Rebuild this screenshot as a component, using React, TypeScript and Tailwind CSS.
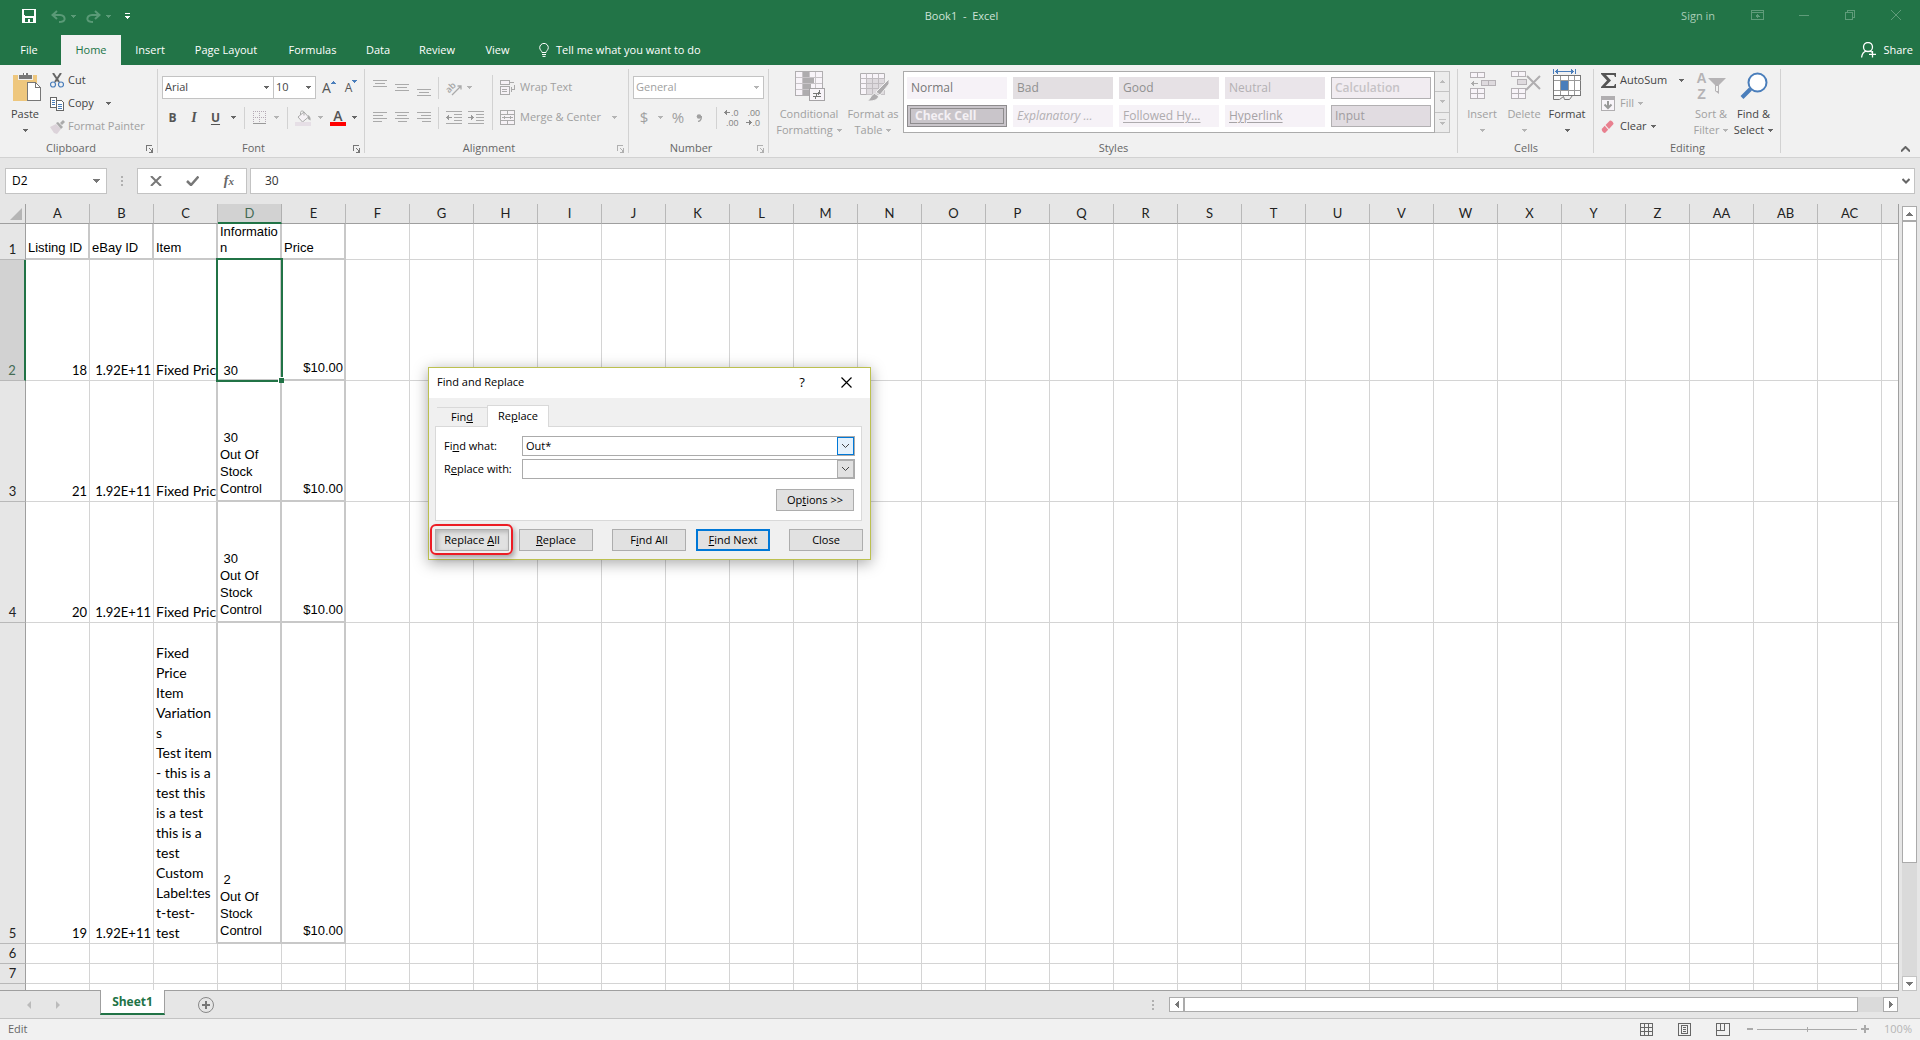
import React, { useState } from 'react';

const UI = "font-['Open_Sans','Segoe_UI',sans-serif]";
const CALIBRI = "font-['Lato','Calibri',sans-serif]";
const ARIAL = "font-['Liberation_Sans',Arial,sans-serif]";

interface IconProps {
  w: number;
  h: number;
  className?: string;
  smooth?: boolean;
  children: React.ReactNode;
}

const Icon = ({ w, h, className = '', smooth = false, children }: IconProps) => (
  <svg
    width={w}
    height={h}
    viewBox={`0 0 ${w} ${h}`}
    fill="none"
    shapeRendering={smooth ? 'auto' : 'crispEdges'}
    className={`shrink-0 ${className}`}
    aria-hidden="true"
  >
    {children}
  </svg>
);

const Caret = ({ className = 'text-[#666]' }: { className?: string }) => (
  <Icon w={5} h={3} className={className}>
    <path d="M0 0h5v1H0zM1 1h3v1H1zM2 2h1v1H2z" fill="currentColor" />
  </Icon>
);

const GREY = 'text-[#b4b4b4]';

const Launcher = ({ className = 'text-[#777]' }: { className?: string }) => (
  <Icon w={8} h={8} className={className}>
    <path d="M.5 6V.5H6M3 3l3 3" stroke="currentColor" />
    <path d="M7 3v5H3V7h2V6h1V3z" fill="currentColor" />
  </Icon>
);

/* ---------- title bar and tabs ---------- */

const TitleBar = () => (
  <header className="flex h-[35px] shrink-0 items-start bg-[#227447] text-white">
    <div className="flex h-8 flex-1 items-center pl-[22px]">
      <button aria-label="Save" className="mr-[15px]">
        <Icon w={14} h={14}>
          <path fillRule="evenodd" fill="#fff" d="M0 0h14v14H0zM2 1v5l1 1h8l1-1V1zM3 9v4h3v-3h2v3h3V9z" />
        </Icon>
      </button>
      <button aria-label="Undo" className="flex items-center gap-[5px] text-[#5a9a77]">
        <Icon w={15} h={13} smooth>
          <path d="M6 1L1.500 5 6 9M2 5h7c3 0 5 2 4.500 4.500C13 11.500 11 12 8 12" stroke="currentColor" strokeWidth={2} />
        </Icon>
        <Caret className="" />
      </button>
      <button aria-label="Redo" className="ml-[10px] flex items-center gap-[5px] text-[#5a9a77]">
        <Icon w={15} h={13} smooth>
          <path d="M9 1l4.500 4L9 9M13 5H6C3 5 1 7 1.500 9.500 2 11.500 4 12 7 12" stroke="currentColor" strokeWidth={2} />
        </Icon>
        <Caret className="" />
      </button>
      <button aria-label="Customize Quick Access Toolbar" className="ml-[14px]">
        <Icon w={5} h={7}>
          <path d="M0 0h5v1H0zM0 3h5v1H0zM1 4h3v1H1zM2 5h1v1H2z" fill="#fff" />
        </Icon>
      </button>
    </div>
    <h1 className="flex h-8 items-center text-[11px] text-[#cfe3d7]">Book1&nbsp; - &nbsp;Excel</h1>
    <div className="flex h-[30px] flex-1 items-center justify-end pr-[19px] text-[#5f9c7a]">
      <a href="#signin" className="mr-[36px] pt-[2px] text-[11px] text-[#a9cdb8]">Sign in</a>
      <button aria-label="Ribbon Display Options" className="mr-[35px]">
        <Icon w={13} h={10}>
          <path d="M.5.5h12v9H.5zM0 2.500h13M6.500 4v4M4.500 6.500h1v-1h2v1h1" stroke="currentColor" />
        </Icon>
      </button>
      <button aria-label="Minimize" className="mr-[36px]">
        <Icon w={10} h={10}><path d="M0 5.500h10" stroke="currentColor" /></Icon>
      </button>
      <button aria-label="Restore Down" className="mr-[36px]">
        <Icon w={10} h={10}><path d="M.5 2.500h7v7h-7zM2.500 2V.5h7v7H8" stroke="currentColor" /></Icon>
      </button>
      <button aria-label="Close">
        <Icon w={10} h={10} smooth><path d="M0 0l10 10M10 0L0 10" stroke="currentColor" /></Icon>
      </button>
    </div>
  </header>
);

const TABS = [
  { name: 'File', className: 'w-[61px] pr-[3px]' },
  { name: 'Home', className: 'w-[60px]' },
  { name: 'Insert', className: 'w-[58px]' },
  { name: 'Page Layout', className: 'w-[94px]' },
  { name: 'Formulas', className: 'w-[79px]' },
  { name: 'Data', className: 'w-[52px]' },
  { name: 'Review', className: 'w-[66px]' },
  { name: 'View', className: 'w-[55px]' },
];

const TabStrip = () => {
  const [active, setActive] = useState('Home');
  return (
    <nav className="flex h-[30px] shrink-0 bg-[#227447] text-[11px] text-white">
      {TABS.map((tab) => (
        <button
          key={tab.name}
          onClick={() => setActive(tab.name)}
          className={`${tab.className} ${active === tab.name ? 'bg-[#f1f1f1] text-[#227447]' : ''}`}
        >
          {tab.name}
        </button>
      ))}
      <button className="ml-[14px] flex items-center gap-[7px]">
        <Icon w={10} h={14} smooth>
          <path d="M3 9.500C3 8 .7 7 .7 4.700a4.300 4.300 0 0 1 8.600 0C9.300 7 7 8 7 9.500zM3 11.500h4M3.500 13.400h3" stroke="#fff" />
        </Icon>
        Tell me what you want to do
      </button>
      <button className="mr-[7px] ml-auto flex items-center gap-[7px]">
        <Icon w={15} h={16} smooth>
          <circle cx="7" cy="5" r="4.500" stroke="#fff" strokeWidth={1.300} />
          <path d="M.6 15.500c.3-3 2-5.500 4.400-6.300M9 9l2 1.300M11.500 9v6.500M8 12.400h7" stroke="#fff" strokeWidth={1.300} />
        </Icon>
        Share
      </button>
    </nav>
  );
};

/* ---------- ribbon ---------- */

interface GroupProps {
  label: string;
  className: string;
  launcher?: string;
  children: React.ReactNode;
}

const Group = ({ label, className, launcher, children }: GroupProps) => (
  <section className={`flex h-[92px] shrink-0 ${className}`}>
    <div className="flex min-w-0 flex-1 flex-col">
      <div className="flex h-[75px] min-w-0">{children}</div>
      <div className="flex h-[17px] items-center pr-[3px] text-[11px] text-[#666]">
        <span className={`flex-1 text-center ${launcher ? 'pr-1' : 'pl-1'}`}>{label}</span>
        {launcher && (
          <button aria-label={`${label} settings`}>
            <Launcher className={launcher} />
          </button>
        )}
      </div>
    </div>
    <div className="my-1 w-px bg-[#d2d2d2]" />
  </section>
);

interface BigButtonProps {
  icon: React.ReactNode;
  lines: string[];
  className: string;
  caret?: string;
}

/* one line: caret sits below it; two lines: caret follows the second */
const BigButton = ({ icon, lines, className, caret = 'text-[#666]' }: BigButtonProps) => (
  <button className={`flex shrink-0 flex-col items-center text-[11px] leading-4 whitespace-nowrap ${className}`}>
    <span className="flex h-[41px] items-center">{icon}</span>
    <span>{lines[0]}</span>
    <span className="flex h-4 items-center gap-1">
      {lines[1]}
      <Caret className={caret} />
    </span>
  </button>
);

const Clipboard = () => (
  <Group label="Clipboard" className="w-[158px]" launcher="text-[#777]">
    <BigButton
      className="w-[50px] text-[#444]"
      lines={['Paste']}
      icon={
        <Icon w={28} h={30} className="ml-1">
          <path d="M0 4h24v26H0z" fill="#eec77e" />
          <path d="M5 3h4V1h6v2h4v5H5z" fill="#777" stroke="#f1f1f1" />
          <path d="M11 2h2v2h-2z" fill="#fff" />
          <path d="M14.500 11.500h8l5 5v13h-13z" fill="#fff" stroke="#777" />
          <path d="M22.500 11.500v5h5" stroke="#777" />
        </Icon>
      }
    />
    <div className="flex flex-col pt-1 text-[11px] text-[#444]">
      <button className="flex h-[23px] items-center gap-1">
        <Icon w={14} h={15} smooth>
          <path d="M3 0l6 9M11 0L5 9" stroke="#666" strokeWidth={2} />
          <circle cx="3" cy="11.500" r="2.500" stroke="#4a7ebb" strokeWidth={1.200} />
          <circle cx="11" cy="11.500" r="2.500" stroke="#4a7ebb" strokeWidth={1.200} />
        </Icon>
        Cut
      </button>
      <button className="flex h-[23px] items-center gap-1">
        <Icon w={14} h={14}>
          <path d="M.5.5h6v10h-6z" fill="#fff" stroke="#666" />
          <path d="M2 3.500h3M2 5.500h3M2 7.500h3" stroke="#4a7ebb" />
          <path d="M6.500 3.500h5l2 2v8h-7z" fill="#fff" stroke="#666" />
          <path d="M8 7.500h4M8 9.500h4M8 11.500h4" stroke="#4a7ebb" />
        </Icon>
        <span className="mr-2">Copy</span>
        <Caret />
      </button>
      <button className="flex h-[23px] items-center gap-1 text-[#a0a0a0]">
        <Icon w={15} h={14} smooth className="-mr-px">
          <path d="M0 7l6-3 5 5-4 5-3-1z" fill="#dcd3da" />
          <path d="M6 3l2-1 5 5-2 2z" fill="#aaa" />
          <path d="M10 3l3-3 2 2-3 3z" fill="#aaa" />
        </Icon>
        Format Painter
      </button>
    </div>
  </Group>
);

const VSep = ({ className = 'h-[22px]' }: { className?: string }) => <span className={`w-px bg-[#d2d2d2] ${className}`} />;

interface ComboProps {
  label: string;
  value: string;
  className: string;
  disabled?: boolean;
}

const Combo = ({ label, value, className, disabled }: ComboProps) => (
  <span className={`relative flex h-[23px] items-center border border-[#c3c3c3] bg-white ${className}`}>
    <select
      aria-label={label}
      defaultValue={value}
      className={`h-full w-full appearance-none bg-transparent pl-[2px] text-[11px] outline-none ${disabled ? 'text-[#a0a0a0]' : 'text-[#444]'}`}
    >
      <option>{value}</option>
    </select>
    <span className="pointer-events-none absolute right-1">
      <Caret className={disabled ? GREY : 'text-[#666]'} />
    </span>
  </span>
);

const FontGroup = () => (
  <Group label="Font" className="w-[207px]" launcher="text-[#777]">
    <div className="flex flex-col gap-[7px] pt-[11px] pl-1 text-[#555]">
      <div className="flex h-[23px] items-center">
        <Combo label="Font" value="Arial" className="w-[112px]" />
        <Combo label="Font size" value="10" className="-ml-px w-[43px]" />
        <button aria-label="Increase Font Size" className="ml-[6px] flex items-start">
          <span className="text-[14px] leading-5">A</span>
          <Icon w={5} h={3} className="mt-[3px]"><path d="M2 0h1v1h1v1h1v1H0V2h1V1h1z" fill="#4a7ebb" /></Icon>
        </button>
        <button aria-label="Decrease Font Size" className="ml-[9px] flex items-start">
          <span className="text-[12px] leading-[22px]">A</span>
          <Icon w={5} h={3} className="mt-[3px]"><path d="M0 0h5v1H4v1H3v1H2V2H1V1H0z" fill="#4a7ebb" /></Icon>
        </button>
      </div>
      <div className="flex h-[23px] items-center">
        <button className="w-[21px] text-[12px] font-bold">B</button>
        <button className="w-[22px] font-['Liberation_Serif',serif] text-[14px] font-bold italic">I</button>
        <button className="w-[21px] text-[12px] font-bold underline underline-offset-2">U</button>
        <button aria-label="Underline options" className="ml-[5px]"><Caret /></button>
        <VSep className="ml-[8px] h-[22px]" />
        <button aria-label="Borders" className="ml-[8px] flex items-center gap-[8px]">
          <Icon w={13} h={13}>
            <path d="M0 .5h13M0 6.500h13" stroke="#b5aab5" strokeDasharray="1 1" />
            <path d="M.5 0v12M6.500 0v12M12.500 0v12" stroke="#b5aab5" strokeDasharray="1 1" />
            <path d="M0 12.500h13" stroke="#999" />
          </Icon>
          <Caret className={GREY} />
        </button>
        <VSep className="ml-[8px] h-[22px]" />
        <button aria-label="Fill Color" className="ml-[7px] flex items-center gap-[6px]">
          <Icon w={17} h={16} smooth>
            <path d="M3 7l6-5 4.500 5-6 5z" fill="#f6f2f6" stroke="#aaa" />
            <path d="M5.500 5V2.500C5.500.5 9 .5 9 2.500v3" stroke="#aaa" />
            <path d="M13 5c2 1 3 3 2.500 5.500L13 9z" fill="#aaa" />
            <path d="M0 12h16v4H0z" fill="#e6dfe6" />
          </Icon>
          <Caret className={GREY} />
        </button>
        <button aria-label="Font Color" className="ml-[7px] flex items-center gap-[6px]">
          <span className="flex h-4 w-4 flex-col items-center border-b-4 border-[#f00] text-[14px] leading-[11px] font-semibold">A</span>
          <Caret />
        </button>
      </div>
    </div>
  </Group>
);

const Lines = ({ d }: { d: string }) => (
  <Icon w={14} h={17}><path d={d} stroke="#aaa" /></Icon>
);

const Indent = ({ right }: { right?: boolean }) => (
  <Icon w={16} h={13}>
    <path d="M0 .5h16M8 3.500h8M8 6.500h8M8 9.500h8M0 12.500h16" stroke="#aaa" />
    <path d={right ? 'M0 6.500h6M3.500 4v5M4.500 5v3' : 'M0 6.500h6M2.500 4v5M1.500 5v3'} stroke="#999" />
  </Icon>
);

const Alignment = () => (
  <Group label="Alignment" className="w-[264px] text-[#a0a0a0]" launcher="text-[#b0b0b0]">
    <div className="flex flex-col gap-[7px] pt-[11px] pl-2">
      <div className="flex h-[23px] items-center">
        <button aria-label="Top Align" className="mr-2"><Lines d="M0 1.500h14M2 4.500h10M0 7.500h14" /></button>
        <button aria-label="Middle Align" className="mr-2"><Lines d="M0 5.500h14M2 8.500h10M0 11.500h14" /></button>
        <button aria-label="Bottom Align"><Lines d="M0 10.500h14M2 13.500h10M0 16.500h14" /></button>
        <VSep className="mx-[7px] h-[22px]" />
        <button aria-label="Orientation" className="flex items-center gap-[4px]">
          <Icon w={17} h={16} smooth className="overflow-visible">
            <text x="1" y="11" fontSize="9" fontWeight="600" fontFamily="Open Sans" fill="#a5a5a5" transform="rotate(-45 5 10)">ab</text>
            <path d="M6 15L15 6M11.500 6H15v3.500" stroke="#aaa" strokeWidth={1.300} />
          </Icon>
          <Caret className={GREY} />
        </button>
      </div>
      <div className="flex h-[23px] items-center">
        <button aria-label="Align Left" className="mr-2"><Lines d="M0 3.500h14M0 6.500h10M0 9.500h14M0 12.500h9" /></button>
        <button aria-label="Center" className="mr-2"><Lines d="M0 3.500h14M2 6.500h10M0 9.500h14M3 12.500h9" /></button>
        <button aria-label="Align Right"><Lines d="M0 3.500h14M4 6.500h10M0 9.500h14M5 12.500h9" /></button>
        <VSep className="mx-[7px] h-[22px]" />
        <button aria-label="Decrease Indent" className="mr-[6px]"><Indent /></button>
        <button aria-label="Increase Indent"><Indent right /></button>
      </div>
    </div>
    <VSep className="mt-[10px] mr-[7px] ml-2 h-[55px]" />
    <div className="flex flex-col gap-[7px] pt-[11px] text-[11px]">
      <button className="flex h-[23px] items-center gap-[5px]">
        <Icon w={15} h={15}>
          <path d="M.5.5h9v4h-9zM9 2.500h5M.5 6.500h9v8h-9z" fill="#f6f2f6" stroke="#aaa" />
          <path d="M2 9.500h5M2 11.500h5M14.500 5v4h-4M11.500 7v5" stroke="#aaa" />
        </Icon>
        Wrap Text
      </button>
      <button className="flex h-[23px] items-center gap-[5px]">
        <Icon w={15} h={15}>
          <path d="M.5.5h14v14H.5zM7.500 1v3M7.500 11v3M.5 4.500h14M.5 10.500h14" fill="#f6f2f6" stroke="#aaa" />
          <path d="M2 7.500h11M4.500 6v3M10.500 6v3" stroke="#aaa" />
        </Icon>
        <span className="mr-[6px]">Merge &amp; Center</span>
        <Caret className={GREY} />
      </button>
    </div>
  </Group>
);

const NumberGroup = () => (
  <Group label="Number" className="w-[140px] text-[#a0a0a0]" launcher="text-[#b0b0b0]">
    <div className="flex flex-col gap-[7px] pt-[11px] pl-1">
      <Combo label="Number Format" value="General" className="w-[131px]" disabled />
      <div className="flex h-[23px] items-center">
        <button className="ml-[6px] w-[10px] text-[15px]">$</button>
        <button aria-label="Accounting formats" className="ml-[9px]"><Caret className={GREY} /></button>
        <button className="ml-[8px] w-[14px] text-[15px]">%</button>
        <button aria-label="Comma Style" className="ml-[11px]">
          <Icon w={6} h={8} smooth><circle cx="3" cy="2.500" r="2.300" fill="#a0a0a0" /><path d="M5.300 2c.3 3-1.300 5-3.300 5.500" stroke="#a0a0a0" strokeWidth={1.300} /></Icon>
        </button>
        <VSep className="mr-[7px] ml-[14px] h-[22px]" />
        <button aria-label="Increase Decimal" className={`mr-[7px] flex flex-col items-end text-[9px] leading-[10px] text-[#888] ${ARIAL}`}>
          <span className="flex h-[10px] items-center gap-px">
            <Icon w={6} h={5}><path d="M0 2.500h6M1.500 1v3M2.500 0v5" stroke="currentColor" /></Icon>.0
          </span>
          <span className="h-[10px]">.00</span>
        </button>
        <button aria-label="Decrease Decimal" className={`flex flex-col items-end text-[9px] leading-[10px] text-[#888] ${ARIAL}`}>
          <span className="h-[10px]">.00</span>
          <span className="flex h-[10px] items-center gap-px">
            <Icon w={6} h={5}><path d="M0 2.500h6M4.500 1v3M3.500 0v5" stroke="currentColor" /></Icon>.0
          </span>
        </button>
      </div>
    </div>
  </Group>
);

const CELL_STYLES = [
  { name: 'Normal', className: 'bg-[#f6f2f7] text-[#777]' },
  { name: 'Bad', className: 'bg-[#e3dfe2] text-[#909090]' },
  { name: 'Good', className: 'bg-[#e6e1e5] text-[#909090]' },
  { name: 'Neutral', className: 'bg-[#eae5ea] text-[#b3b0b3]' },
  { name: 'Calculation', className: 'border border-[#b2b0b2] bg-[#f1ecf1] pl-[3px] font-semibold text-[#c5c2c5]' },
  { name: 'Check Cell', className: 'border-4 border-double border-[#8e8c8e] bg-[#c9c5ca] pl-0 font-bold text-[#f4f0f4]' },
  { name: 'Explanatory ...', className: 'bg-[#f6f2f7] text-[#b3b0b3] italic' },
  { name: 'Followed Hy...', className: 'bg-[#f6f2f7] text-[#aeabae] underline underline-offset-2' },
  { name: 'Hyperlink', className: 'bg-[#f6f2f7] text-[#a6a3a6] underline underline-offset-2' },
  { name: 'Input', className: 'border border-[#b2b0b2] bg-[#e1dce1] pl-[3px] text-[#a09da0]' },
];

const Styles = () => (
  <Group label="Styles" className="w-[689px] text-[#a0a0a0]">
    <BigButton
      className="ml-[6px] w-[68px]"
      caret={GREY}
      lines={['Conditional', 'Formatting']}
      icon={
        <Icon w={30} h={30} className="ml-[2px]">
          <path d="M.5.5h27v24H.5z" fill="#f8f4f9" stroke="#b0aeb0" />
          <path d="M7 1h7v23H7zM14 7h5v6h-5zM14 13h2v5h-2z" fill="#aeacae" />
          <path d="M1 6.500h26M1 12.500h26M1 18.500h26M7.500 1v23M14.500 1v5M20.500 1v23" stroke="#c8c4c8" />
          <path d="M14.500 17.500h15v12h-15z" fill="#f8f4f9" stroke="#a5a3a5" />
          <path d="M18 22.500h8M18 25.500h8M24.500 19v3M23.500 21v3M21.500 23v3M20.500 25v3" stroke="#777" />
        </Icon>
      }
    />
    <BigButton
      className="ml-[2px] w-[56px]"
      caret={GREY}
      lines={['Format as', 'Table']}
      icon={
        <Icon w={30} h={29} smooth className="mt-1 ml-1">
          <path d="M.5.5h24v21H.5z" fill="#f8f4f9" stroke="#b0aeb0" />
          <path d="M6.500 5.500h18v16h-18z" fill="#dedade" />
          <path d="M.5 5.500h24M.5 10.500h24M.5 15.500h24M6.500.5v21M12.500.5v21M18.500.5v21" stroke="#c0bcc0" />
          <path d="M29 6v5l-9 11-4-3z" fill="#aeacae" stroke="#f1f1f1" />
          <path d="M14.500 20.500l4 2.500c0 3-4 5.500-11 5 3-2 3.500-6.500 7-7.500z" fill="#aeacae" stroke="#f1f1f1" />
        </Icon>
      }
    />
    <div className="mt-[6px] ml-[2px] flex h-[62px] min-w-0 flex-1 border border-[#ababab] bg-white px-[3px]">
      <div className="grid flex-1 grid-cols-5 grid-rows-2 gap-[6px] py-[5px]">
        {CELL_STYLES.map((style) => (
          <button key={style.name} className={`flex items-center pl-1 text-[12px] leading-4 whitespace-nowrap ${style.className}`}>
            {style.name}
          </button>
        ))}
      </div>
    </div>
    <div className="mt-[6px] mr-[7px] flex h-[62px] w-[15px] flex-col divide-y divide-[#c3c3c3] border border-l-0 border-[#c3c3c3] bg-[#ececec] text-[#bbb]">
      <button aria-label="Previous styles" className="flex flex-1 items-center justify-center">
        <Icon w={5} h={3}><path d="M2 0h1v1h1v1h1v1H0V2h1V1h1z" fill="currentColor" /></Icon>
      </button>
      <button aria-label="Next styles" className="flex flex-1 items-center justify-center"><Caret className="" /></button>
      <button aria-label="More styles" className="flex flex-1 flex-col items-center justify-center gap-[2px]">
        <span className="h-px w-[7px] bg-[#c3c3c3]" />
        <Caret className="" />
      </button>
    </div>
  </Group>
);

const Cells = () => (
  <Group label="Cells" className="w-[136px] text-[#a0a0a0]">
    <BigButton
      className="ml-[3px] w-[42px]"
      caret={GREY}
      lines={['Insert']}
      icon={
        <Icon w={26} h={28} className="ml-[2px]">
          <path d="M.5.5h14v5h-14zM7.500.5v5M.5 16.500h14v10h-14zM7.500 16.500v10M.5 21.500h14" fill="#f8f4f9" stroke="#b5b1b5" />
          <path d="M11.500 8.500h14v5h-14zM18.500 8.500v5" fill="#dedade" stroke="#b5b1b5" />
          <path d="M1 11h7M3.500 8.500v5M2.500 9.500v3" stroke="#aaa" />
        </Icon>
      }
    />
    <BigButton
      className="w-[42px]"
      caret={GREY}
      lines={['Delete']}
      icon={
        <Icon w={30} h={29} className="ml-1">
          <path d="M.5.5h14v5h-14zM7.500.5v5M.5 17.500h14v10h-14zM7.500 17.500v10M.5 22.500h14" fill="#f8f4f9" stroke="#b5b1b5" />
          <path d="M6.500 8.500h9v5h-9z" fill="#dedade" stroke="#b5b1b5" />
          <path d="M16 5l13 13M29 5L15 19" stroke="#b0aeb0" strokeWidth={2} shapeRendering="auto" />
        </Icon>
      }
    />
    <BigButton
      className="w-[44px] text-[#444]"
      lines={['Format']}
      icon={
        <Icon w={28} h={32} className="-mt-px">
          <path d="M.5 0v5M22.500 0v5M2 2.500h19M3.500 1v3M4.500 0v5M19.500 1v3M18.500 0v5" stroke="#4a7ebb" />
          <path d="M.5 6.500h27v20H.5z" fill="#fff" stroke="#777" />
          <path d="M.5 11.500h27M.5 21.500h27M7.500 7v19M15.500 7v19M21.500 7v19" stroke="#999" />
          <path d="M8 12h7v9H8z" fill="#4a7ebb" />
          <path d="M.5 27v3.500h6l4-3 1 3h5l3-4" stroke="#777" shapeRendering="auto" />
        </Icon>
      }
    />
  </Group>
);

const Editing = () => (
  <Group label="Editing" className="w-[187px]">
    <div className="flex w-[92px] flex-col pt-1 pl-[7px] text-[11px] text-[#444]">
      <button className="flex h-[23px] items-center gap-1">
        <Icon w={15} h={15} smooth><path d="M0 0h15v4h-1l-1-2H5l5 5.500L4.500 13H13l1-2h1v4H0v-1l6-6.500L0 1z" fill="#555" /></Icon>
        <span className="mr-2">AutoSum</span>
        <Caret />
      </button>
      <button className="flex h-[23px] items-center gap-1 text-[#a0a0a0]">
        <Icon w={14} h={15} className="mr-px">
          <path d="M.5.5h13v14H.5z" fill="#f8f4f9" stroke="#b0aeb0" />
          <path d="M0 0h14v4H0z" fill="#b0aeb0" />
          <path d="M7 5v7M3.500 8.500L7 12l3.500-3.500" stroke="#999" strokeWidth={2} shapeRendering="auto" />
        </Icon>
        Fill
        <Caret className={GREY} />
      </button>
      <button className="flex h-[23px] items-center gap-1">
        <Icon w={14} h={14} smooth className="mr-px">
          <path d="M4.500 5L9 .5c.8-.6 4 2 3.500 3.500L8 9z" fill="#e8808f" />
          <path d="M3.700 5.800l3.500 4L4 13C2.500 13 .5 11 .7 9z" fill="#e8808f" />
        </Icon>
        Clear
        <Caret />
      </button>
    </div>
    <BigButton
      className="ml-[3px] w-[44px] text-[#a0a0a0]"
      caret={GREY}
      lines={['Sort &', 'Filter']}
      icon={
        <span className="flex items-center">
          <span className={`flex flex-col items-center text-[14px] leading-4 font-bold text-[#b5b3b5] ${ARIAL}`}>
            <span>A</span>
            <span>Z</span>
          </span>
          <Icon w={18} h={16} smooth className="ml-px">
            <path d="M0 0h18l-7 7v9l-4-3V7z" fill="#b5b3b5" />
            <path d="M8 8h2v5H8z" fill="#f1f1f1" />
          </Icon>
        </span>
      }
    />
    <BigButton
      className="w-[41px] text-[#444]"
      lines={['Find &', 'Select']}
      icon={
        <Icon w={28} h={28} smooth>
          <path d="M10.500 17L2 25.500" stroke="#4a7ebb" strokeWidth={4} />
          <circle cx="17.500" cy="10.500" r="9" fill="#fff" stroke="#4a7ebb" strokeWidth={2} />
        </Icon>
      }
    />
  </Group>
);

const Ribbon = () => (
  <div className="flex shrink-0 items-end border-b border-[#d2d2d2] bg-[#f1f1f1]">
    <Clipboard />
    <FontGroup />
    <Alignment />
    <NumberGroup />
    <Styles />
    <Cells />
    <Editing />
    <button aria-label="Collapse the Ribbon" className="mr-[10px] mb-[5px] ml-auto">
      <Icon w={9} h={6} smooth><path d="M0 5.500L4.500 1 9 5.500" stroke="#666" strokeWidth={2} /></Icon>
    </button>
  </div>
);

/* ---------- formula bar ---------- */

const FormulaBar = () => (
  <div className="flex h-[46px] shrink-0 items-center bg-[#e6e6e6] px-[5px]">
    <div className="flex h-[26px] w-[102px] items-center border border-[#c3c3c3] bg-white">
      <input aria-label="Name Box" defaultValue="D2" className="w-0 flex-1 pl-[6px] text-[12px] text-black outline-none" />
      <button aria-label="Named ranges" className="px-[6px]">
        <Icon w={7} h={4}><path d="M0 0h7v1H6v1H5v1H4v1H3V3H2V2H1V1H0z" fill="#777" /></Icon>
      </button>
    </div>
    <Icon w={2} h={10} className="mx-[14px]"><path d="M0 0h2v2H0zM0 4h2v2H0zM0 8h2v2H0z" fill="#b0b0b0" /></Icon>
    <div className="flex h-[26px] w-[110px] items-center justify-between border border-[#c3c3c3] bg-white px-3">
      <button aria-label="Cancel"><Icon w={12} h={10} smooth><path d="M1 0l10 10M11 0L1 10" stroke="#777" strokeWidth={2} /></Icon></button>
      <button aria-label="Enter"><Icon w={13} h={10} smooth><path d="M1 5l4 4 7.500-8.500" stroke="#777" strokeWidth={2.500} /></Icon></button>
      <button aria-label="Insert Function" className="font-['Liberation_Serif',serif] text-[14px] leading-4 font-bold text-[#666] italic">
        f<span className="text-[11px]">x</span>
      </button>
    </div>
    <div className="ml-[3px] flex h-[26px] flex-1 items-center border border-[#c3c3c3] bg-white">
      <input aria-label="Formula Bar" defaultValue="30" className="w-0 flex-1 pl-[14px] text-[12px] text-[#333] outline-none" />
      <button aria-label="Expand Formula Bar" className="px-1">
        <Icon w={8} h={6} smooth><path d="M.5 1L4 4.500 7.500 1" stroke="#666" strokeWidth={2} /></Icon>
      </button>
    </div>
  </div>
);

/* ---------- sheet ---------- */

const COLUMNS = [...Array.from({ length: 26 }, (_, i) => String.fromCharCode(65 + i)), 'AA', 'AB', 'AC', ''];

interface Row {
  label: string;
  height: string;
  cells: string[];
}

const ROWS: Row[] = [
  { label: '1', height: 'h-9', cells: ['Listing ID', 'eBay ID', 'Item', 'Informatio\nn', 'Price'] },
  { label: '2', height: 'h-[121px]', cells: ['18', '1.92E+11', 'Fixed Pric', ' 30', '$10.00'] },
  { label: '3', height: 'h-[121px]', cells: ['21', '1.92E+11', 'Fixed Pric', ' 30\nOut Of\nStock\nControl', '$10.00'] },
  { label: '4', height: 'h-[121px]', cells: ['20', '1.92E+11', 'Fixed Pric', ' 30\nOut Of\nStock\nControl', '$10.00'] },
  {
    label: '5',
    height: 'h-[321px]',
    cells: [
      '19',
      '1.92E+11',
      'Fixed\nPrice\nItem\nVariation\ns\nTest item\n- this is a\ntest this\nis a test\nthis is a\ntest\nCustom\nLabel:tes\nt-test-\ntest',
      ' 2\nOut Of\nStock\nControl',
      '$10.00',
    ],
  },
  { label: '6', height: 'h-5', cells: [] },
  { label: '7', height: 'h-5', cells: [] },
  { label: '', height: 'h-5', cells: [] },
];

const cellClass = (row: number, col: number) => {
  const data = row < 5 && col < 5;
  const thickRight = data && (row === 0 || col >= 2);
  const thickBottom = data && (row === 0 || col >= 3);
  const border = `${thickRight ? 'border-r-2 border-r-[#c8c8c8]' : 'border-r border-r-[#d4d4d4]'} ${
    thickBottom ? 'border-b-2 border-b-[#c8c8c8]' : 'border-b border-b-[#d4d4d4]'
  }`;
  if (!data) return border;
  let font = `${CALIBRI} text-[13px] leading-5`;
  if (row === 0) font = `${ARIAL} pb-[2px] text-[13px] leading-4`;
  else if (col >= 3) font = `${ARIAL} text-[13px] leading-[17px] ${row === 1 && col === 3 ? '' : 'pb-[3px]'}`;
  else if (col === 2) font = `${CALIBRI} text-[14px] leading-5`;
  const align = row > 0 && (col < 2 || col === 4) ? 'text-right' : 'text-left';
  const right = col < 2 ? 'pr-[2px]' : col === 4 ? 'pr-px' : '';
  return `${border} ${font} ${align} ${right} pl-[2px] align-bottom whitespace-pre text-black`;
};

const Sheet = () => (
  <div className="flex min-h-0 flex-1 bg-[#e6e6e6]">
    <div className="relative min-w-0 flex-1 overflow-hidden border-b border-[#9f9f9f]">
      {/* columns keep their own width, the table runs out under the scroll bar */}
      <table className="w-px table-fixed border-separate border-spacing-0 bg-white">
        <colgroup>
          <col className="w-[26px]" />
          {COLUMNS.map((_, i) => <col key={i} className="w-16" />)}
        </colgroup>
        <thead>
          <tr className={`h-5 bg-[#e6e6e6] text-[13px] leading-[15px] text-[#222] ${CALIBRI}`}>
            <th className="border-r border-b border-[#9f9f9f] p-0">
              <Icon w={12} h={12} smooth className="ml-[10px]"><path d="M12 0v12H0z" fill="#b5b5b5" /></Icon>
            </th>
            {COLUMNS.map((name, i) => (
              <th
                key={i}
                className={`border-r p-0 font-normal ${
                  name === 'D'
                    ? 'border-b-2 border-r-[#b0b0b0] border-b-[#217346] bg-[#d2d2d2] text-[#446b54]'
                    : 'border-b border-r-[#b8b8b8] border-b-[#9f9f9f]'
                }`}
              >
                {name}
              </th>
            ))}
          </tr>
        </thead>
        <tbody>
          {ROWS.map((row, r) => (
            <tr key={r} className={row.height}>
              <th
                className={`border-b border-b-[#b8b8b8] p-0 align-bottom text-[13px] leading-[19px] font-normal ${CALIBRI} ${
                  row.label === '2' ? 'border-r-2 border-r-[#217346] bg-[#d2d2d2] text-[#446b54]' : 'border-r border-r-[#9f9f9f] bg-[#e6e6e6] text-[#222]'
                }`}
              >
                {row.label}
              </th>
              {COLUMNS.map((_, c) => (
                <td key={c} className={`p-0 ${cellClass(r, c)}`}>{row.cells[c]}</td>
              ))}
            </tr>
          ))}
        </tbody>
      </table>
      {/* selection frame around D2 */}
      <div className="pointer-events-none absolute top-[54px] left-[216px] h-[124px] w-[67px] border-2 border-[#217346]">
        <span className="absolute -right-[3px] -bottom-[3px] h-[6px] w-[6px] border-t border-l border-white bg-[#217346]" />
      </div>
    </div>
    <div className="flex w-[22px] flex-col border-l border-[#9f9f9f] pt-[2px] pr-[3px] pl-[3px]">
      <button aria-label="Scroll up" className="flex h-[15px] items-center justify-center border border-[#ababab] bg-white">
        <Icon w={7} h={4}><path d="M3 0h1v1h1v1h1v1h1v1H0V3h1V2h1V1h1z" fill="#777" /></Icon>
      </button>
      <div className="flex flex-1 flex-col bg-[#dadada]">
        <div className="h-[85%] border border-[#ababab] bg-white" />
      </div>
      <button aria-label="Scroll down" className="flex h-[15px] items-center justify-center border border-[#c3c3c3] bg-white">
        <Icon w={7} h={4}><path d="M0 0h7v1H6v1H5v1H4v1H3V3H2V2H1V1H0z" fill="#777" /></Icon>
      </button>
    </div>
  </div>
);

const SheetBar = () => (
  <div className="flex h-[27px] shrink-0 items-center bg-[#e6e6e6] pr-[22px]">
    <button aria-label="Previous sheet" className="ml-[27px]">
      <Icon w={4} h={8} smooth><path d="M4 0v8L0 4z" fill="#bbb" /></Icon>
    </button>
    <button aria-label="Next sheet" className="ml-[25px]">
      <Icon w={4} h={8} smooth><path d="M0 0v8l4-4z" fill="#bbb" /></Icon>
    </button>
    <button className="relative -mt-px ml-[40px] h-[25px] w-[65px] self-start border-x border-b-2 border-x-[#9f9f9f] border-b-[#217346] bg-white text-[12px] font-bold text-[#217346]">
      Sheet1
    </button>
    <button aria-label="New sheet" className="ml-[33px]">
      <Icon w={16} h={16} smooth>
        <circle cx="8" cy="8" r="7.500" stroke="#888" />
        <path d="M4 8h8M8 4v8" stroke="#777" strokeWidth={2} />
      </Icon>
    </button>
    <Icon w={2} h={10} className="ml-auto"><path d="M0 0h2v2H0zM0 4h2v2H0zM0 8h2v2H0z" fill="#b0b0b0" /></Icon>
    <div className="ml-[15px] flex h-[15px] w-[729px] bg-[#dadada]">
      <button aria-label="Scroll left" className="flex w-[15px] items-center justify-center border border-[#ababab] bg-white">
        <Icon w={4} h={7}><path d="M4 0v7H3V6H2V5H1V4H0V3h1V2h1V1h1V0z" fill="#777" /></Icon>
      </button>
      <div className="flex-1 pr-[25px]">
        <div className="h-full border border-[#ababab] bg-white" />
      </div>
      <button aria-label="Scroll right" className="flex w-[15px] items-center justify-center border border-[#ababab] bg-white">
        <Icon w={4} h={7}><path d="M0 0v7h1V6h1V5h1V4h1V3H3V2H2V1H1V0z" fill="#777" /></Icon>
      </button>
    </div>
  </div>
);

const StatusBar = () => (
  <footer className="flex h-[22px] shrink-0 items-center border-t border-[#c3c3c3] bg-[#f1f1f1] px-2 pb-px text-[11px] text-[#666]">
    <span>Edit</span>
    <button aria-label="Normal view" className="ml-auto">
      <Icon w={13} h={13}><path d="M.5.5h12v12H.5zM4.500 0v13M8.500 0v13M0 4.500h13M0 8.500h13" stroke="#666" /></Icon>
    </button>
    <button aria-label="Page Layout view" className="ml-[25px]">
      <Icon w={13} h={13}><path d="M.5.5h12v12H.5zM3.500 2.500h6v8h-6zM5 4.500h3M5 6.500h3M5 8.500h3" stroke="#666" /></Icon>
    </button>
    <button aria-label="Page Break Preview" className="ml-[25px]">
      <Icon w={14} h={13}><path d="M.5.5h13v12H.5zM0 7.500h9M8.500 0v8M4.500 0v8" stroke="#666" /></Icon>
    </button>
    <button aria-label="Zoom out" className="ml-[17px]"><Icon w={6} h={2}><path d="M0 0h6v2H0z" fill="#aaa" /></Icon></button>
    <input
      type="range"
      aria-label="Zoom"
      min={10}
      max={190}
      defaultValue={100}
      className="mx-[4px] h-px w-[100px] appearance-none bg-[#aaa] [&::-webkit-slider-thumb]:h-[5px] [&::-webkit-slider-thumb]:w-px [&::-webkit-slider-thumb]:appearance-none [&::-webkit-slider-thumb]:bg-[#aaa]"
    />
    <button aria-label="Zoom in"><Icon w={8} h={8}><path d="M0 3h8v2H0zM3 0h2v8H3z" fill="#aaa" /></Icon></button>
    <span className="ml-[15px] text-[#b5b5b5]">100%</span>
  </footer>
);

/* ---------- find and replace ---------- */

const Chevron = () => <Icon w={9} h={6} smooth><path d="M1 1l3.500 3.500L8 1" stroke="#444" /></Icon>;

const DIALOG_BUTTON = 'h-[22px] w-[74px] border border-[#adadad] bg-[#e1e1e1]';

const FindReplaceDialog = () => {
  const [tab, setTab] = useState('Replace');
  const [find, setFind] = useState('Out*');
  const [replace, setReplace] = useState('');
  return (
    <div
      role="dialog"
      aria-label="Find and Replace"
      className="absolute top-[367px] left-[428px] w-[443px] border border-[#bcc04f] bg-[#f0f0f0] pb-[7px] text-[11px] text-black shadow-[0_3px_14px_rgba(0,0,0,0.35)]"
    >
      <div className="flex h-[30px] items-center bg-white pr-[18px] pb-px pl-[8px]">
        <h2 className="flex-1">Find and Replace</h2>
        <button aria-label="Help" className="mr-[36px] w-[6px] text-[13px]">?</button>
        <button aria-label="Close">
          <Icon w={11} h={11} smooth><path d="M.5.5l10 10M10.500.5l-10 10" stroke="#000" strokeWidth={1.200} /></Icon>
        </button>
      </div>
      <div className="px-[6px] pt-[7px]">
        <div className="relative -mb-px flex items-end pl-[2px]">
          <button onClick={() => setTab('Find')} className="h-[20px] w-[50px] border-t border-[#d9d9d9]">
            Fin<u>d</u>
          </button>
          <button onClick={() => setTab('Replace')} className={`h-[22px] w-[62px] border border-b-0 border-[#d9d9d9] ${tab === 'Replace' ? 'bg-white' : ''}`}>
            Re<u>p</u>lace
          </button>
        </div>
        <div className="mr-[2px] border border-[#d9d9d9] bg-white pt-[9px] pr-[6px] pb-[9px] pl-[7px]">
          <div className="flex h-5 items-center">
            <label htmlFor="find-what" className="w-[79px] pl-px">Fi<u>n</u>d what:</label>
            <div className="flex h-full flex-1 border border-[#ababab]">
              <input id="find-what" value={find} onChange={(e) => setFind(e.target.value)} className="w-0 flex-1 pl-[3px] outline-none" />
              <button aria-label="Find history" className="flex w-[17px] items-center justify-center border border-[#0078d7] bg-[#e5f1fb]"><Chevron /></button>
            </div>
          </div>
          <div className="mt-[3px] flex h-5 items-center">
            <label htmlFor="replace-with" className="w-[79px] pl-px">R<u>e</u>place with:</label>
            <div className="flex h-full flex-1 border border-[#ababab]">
              <input id="replace-with" value={replace} onChange={(e) => setReplace(e.target.value)} className="w-0 flex-1 pl-[3px] outline-none" />
              <button aria-label="Replace history" className="flex w-[17px] items-center justify-center border border-[#adadad] bg-[#e1e1e1]"><Chevron /></button>
            </div>
          </div>
          <div className="mt-[10px] flex justify-end pr-px">
            <button className="h-[22px] w-[78px] border border-[#adadad] bg-[#e1e1e1]">Op<u>t</u>ions &gt;&gt;</button>
          </div>
        </div>
        <div className="mt-[8px] flex pb-px">
          <div className="relative">
            <button className={`${DIALOG_BUTTON} shadow-[inset_2px_2px_4px_rgba(0,0,0,0.2)]`}>Replace <u>A</u>ll</button>
            <span className="pointer-events-none absolute -top-[5px] -right-1 -bottom-1 -left-[5px] rounded-md border-2 border-[#ec1c24] shadow-[2px_3px_5px_rgba(0,0,0,0.3)]" />
          </div>
          <button className={`${DIALOG_BUTTON} ml-[10px]`}><u>R</u>eplace</button>
          <button className={`${DIALOG_BUTTON} ml-[19px]`}>F<u>i</u>nd All</button>
          <button className="ml-[10px] h-[22px] w-[74px] border-2 border-[#0078d7] bg-[#e1e1e1]"><u>F</u>ind Next</button>
          <button className={`${DIALOG_BUTTON} -mr-px ml-[19px]`}>Close</button>
        </div>
      </div>
    </div>
  );
};

export default function App() {
  return (
    <div className={`relative flex h-screen flex-col overflow-hidden bg-[#f1f1f1] ${UI}`}>
      <TitleBar />
      <TabStrip />
      <Ribbon />
      <FormulaBar />
      <Sheet />
      <SheetBar />
      <StatusBar />
      <FindReplaceDialog />
    </div>
  );
}
